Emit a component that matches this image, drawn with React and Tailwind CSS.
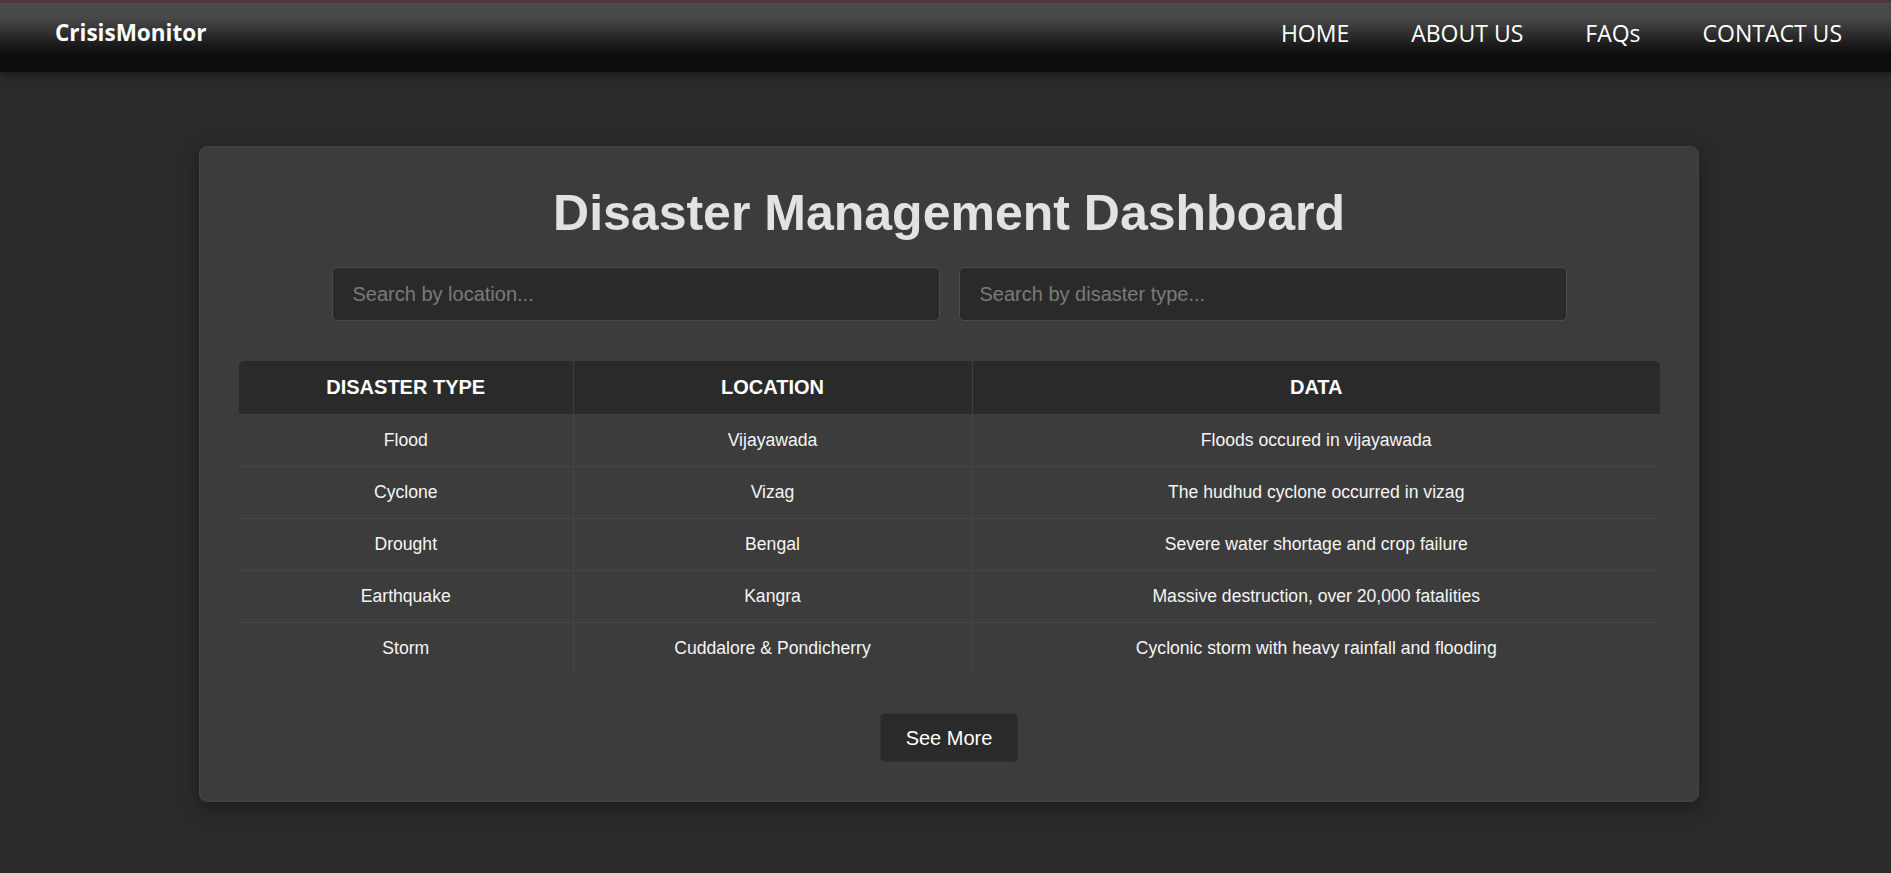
import React from "react";

const rows = [
  ["Flood", "Vijayawada", "Floods occured in vijayawada"],
  ["Cyclone", "Vizag", "The hudhud cyclone occurred in vizag"],
  ["Drought", "Bengal", "Severe water shortage and crop failure"],
  ["Earthquake", "Kangra", "Massive destruction, over 20,000 fatalities"],
  ["Storm", "Cuddalore & Pondicherry", "Cyclonic storm with heavy rainfall and flooding"],
];

export default function App() {
  return (
    <div
      className="min-h-screen bg-[#2a2a2a] pb-[73px]"
      style={{ fontFamily: '"Liberation Sans", Arial, sans-serif' }}
    >
      <nav
        className="flex h-[72px] items-center justify-between border-t-[3px] border-[#50353f] bg-[linear-gradient(to_bottom,#4b4b4b_0%,#484848_22%,#0e0e0e_72%,#0c0c0c_100%)] pb-[9px] pl-[55px] pr-[49px] shadow-[0_2px_8px_rgba(0,0,0,0.5)]"
        style={{ fontFamily: '"Open Sans", "Noto Sans", sans-serif' }}
      >
        <div className="text-[22.5px] font-bold text-white">CrisisMonitor</div>
        <div className="flex items-center gap-[62px] text-[23px] text-white">
          <span>HOME</span>
          <span>ABOUT US</span>
          <span>FAQs</span>
          <span>CONTACT US</span>
        </div>
      </nav>

      <main className="ml-[199px] mt-[74px] w-[1500px] rounded-[8px] border border-[#444444] bg-[#3c3c3c] px-[39px] pb-[39px] pt-[38px] shadow-[0_6px_18px_rgba(0,0,0,0.35)]">
        <h1 className="text-center text-[50px] font-bold leading-[57px] text-[#e2e2e2]">
          Disaster Management Dashboard
        </h1>

        <div className="mt-[25px] flex justify-center gap-[19px]">
          <input
            className="h-[54px] w-[608px] rounded-[5px] border border-[#4c4c4c] bg-[#2a2a2a] px-[20px] text-[20px] text-white outline-none placeholder:text-[#7a7a7a]"
            placeholder="Search by location..."
          />
          <input
            className="h-[54px] w-[608px] rounded-[5px] border border-[#4c4c4c] bg-[#2a2a2a] px-[20px] text-[20px] text-white outline-none placeholder:text-[#7a7a7a]"
            placeholder="Search by disaster type..."
          />
        </div>

        <table className="mt-[40px] w-[1421px] border-collapse overflow-hidden rounded-t-[5px] text-center">
          <thead>
            <tr className="h-[53px] bg-[#2a2a2a] text-[20px] font-bold text-white">
              <th className="w-[334px] rounded-tl-[5px] border-b border-r border-[#3f3f3f]">DISASTER TYPE</th>
              <th className="w-[399px] border-b border-r border-[#3f3f3f]">LOCATION</th>
              <th className="rounded-tr-[5px] border-b border-[#3f3f3f]">DATA</th>
            </tr>
          </thead>
          <tbody className="text-[17.6px] text-[#f5f5f5]">
            {rows.map((r, i) => (
              <tr key={i} className={"h-[52px] " + (i < rows.length - 1 ? "border-b border-[#464646]" : "")}>
                <td className="border-r border-[#444444]">{r[0]}</td>
                <td className="border-r border-[#444444]">{r[1]}</td>
                <td>{r[2]}</td>
              </tr>
            ))}
          </tbody>
        </table>

        <div className="mt-[39px] flex justify-center">
          <button className="h-[49px] w-[138px] rounded-[5px] border border-[#333333] bg-[#2a2a2a] text-[20px] text-white">
            See More
          </button>
        </div>
      </main>
    </div>
  );
}
